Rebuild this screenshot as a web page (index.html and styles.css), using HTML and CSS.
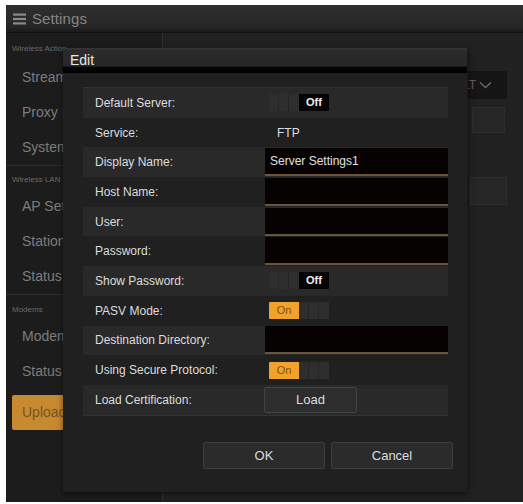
FILE: index.html
```html
<!DOCTYPE html>
<html>
<head>
<meta charset="utf-8">
<link rel="stylesheet" href="styles.css">
</head>
<body>
<div class="app">
  <header class="topbar">
    <svg class="menu-icon" width="13" height="12" viewBox="0 0 13 12"><rect x="0" y="0.5" width="13" height="2.2" fill="#8a8a8a"/><rect x="0" y="4.9" width="13" height="2.2" fill="#8a8a8a"/><rect x="0" y="9.3" width="13" height="2.2" fill="#8a8a8a"/></svg>
    <span class="app-title">Settings</span>
  </header>
  <div class="content">
    <nav class="sidebar">
      <section class="sect sect1">
        <div class="sect-label">Wireless Action</div>
        <div class="nav-item">Streaming</div>
        <div class="nav-item">Proxy Recording</div>
        <div class="nav-item">System</div>
      </section>
      <section class="sect sect2">
        <div class="sect-label">Wireless LAN</div>
        <div class="nav-item">AP Settings</div>
        <div class="nav-item">Station Settings</div>
        <div class="nav-item">Status</div>
      </section>
      <section class="sect sect3">
        <div class="sect-label">Modems</div>
        <div class="nav-item">Modem Settings</div>
        <div class="nav-item">Status</div>
        <div class="upload-btn"><span class="upload-text">Upload Settings</span></div>
      </section>
    </nav>
    <main class="main">
      <div class="bg-select"><span class="bg-select-text">DEFAULT</span><svg width="13" height="8" viewBox="0 0 13 8"><path d="M1 1.5 L6.5 6.5 L12 1.5" fill="none" stroke="#6a6a6a" stroke-width="1.4"/></svg></div>
      <div class="bg-box bg-box1"></div>
      <div class="bg-box bg-box2"></div>
    </main>
  </div>

  <div class="dialog">
    <div class="dialog-title">Edit</div>
    <div class="dialog-body">
      <div class="form">
        <div class="row"><div class="lbl">Default Server:</div><div class="val"><div class="toggle off"><span class="grip"></span><span class="state">Off</span></div></div></div>
        <div class="row"><div class="lbl">Service:</div><div class="val"><span class="plain">FTP</span></div></div>
        <div class="row"><div class="lbl">Display Name:</div><div class="val"><div class="input">Server Settings1</div></div></div>
        <div class="row"><div class="lbl">Host Name:</div><div class="val"><div class="input"></div></div></div>
        <div class="row"><div class="lbl">User:</div><div class="val"><div class="input"></div></div></div>
        <div class="row"><div class="lbl">Password:</div><div class="val"><div class="input"></div></div></div>
        <div class="row"><div class="lbl">Show Password:</div><div class="val"><div class="toggle off"><span class="grip"></span><span class="state">Off</span></div></div></div>
        <div class="row"><div class="lbl">PASV Mode:</div><div class="val"><div class="toggle on"><span class="state">On</span><span class="grip"></span></div></div></div>
        <div class="row"><div class="lbl">Destination Directory:</div><div class="val"><div class="input"></div></div></div>
        <div class="row"><div class="lbl">Using Secure Protocol:</div><div class="val"><div class="toggle on"><span class="state">On</span><span class="grip"></span></div></div></div>
        <div class="row"><div class="lbl">Load Certification:</div><div class="val"><button class="btn load-btn">Load</button></div></div>
      </div>
      <div class="actions">
        <button class="btn act-btn">OK</button>
        <button class="btn act-btn">Cancel</button>
      </div>
    </div>
  </div>
</div>
</body>
</html>
```
FILE: styles.css
```css
* { box-sizing: border-box; }
html, body { margin: 0; padding: 0; background: #ffffff; }
body {
  font-family: "Liberation Sans", Arial, sans-serif;
  width: 523px;
  height: 504px;
  overflow: hidden;
}
.app {
  position: relative;
  margin: 5px 0 0 6px;
  width: 517px;
  height: 497px;
  background: #1d1d1d;
  display: flex;
  flex-direction: column;
  overflow: hidden;
}
.topbar {
  height: 28px;
  flex: none;
  display: flex;
  align-items: center;
  gap: 6px;
  padding-left: 7px;
  background: linear-gradient(#2f2f2f, #262626 80%, #1a1a1a);
  border-bottom: 1px solid #111;
}
.menu-icon { display: block; }
.app-title {
  color: #848484;
  font-size: 15px;
  letter-spacing: 0.1px;
}
.content {
  flex: 1;
  display: flex;
  min-height: 0;
}
.sidebar {
  width: 157px;
  flex: none;
  background: #1c1c1c;
  border-right: 1px solid #303030;
}
.sect { border-bottom: 1px solid #2f2f2f; }
.sect3 { border-bottom: none; }
.sect-label {
  width: 62px;
  overflow: hidden;
  font-size: 8px;
  line-height: 16px;
  height: 16px;
  color: #6a6a6a;
  padding-left: 6px;
  white-space: nowrap;
}
.sect1 .sect-label { margin-top: 8px; margin-bottom: 3px; }
.sect2 .sect-label { margin-top: 6px; margin-bottom: 1px; }
.sect3 .sect-label { margin-top: 7px; margin-bottom: 1px; }
.nav-item {
  width: 57px;
  overflow: hidden;
  height: 35px;
  line-height: 35px;
  padding-left: 16px;
  font-size: 14px;
  color: #7c7c7c;
  white-space: nowrap;
}
.upload-btn {
  margin: 6px 0 0 6px;
  width: 140px;
  height: 35px;
  border-radius: 2px;
  background: #c88a30;
}
.upload-text {
  display: block;
  width: 51px;
  overflow: hidden;
  line-height: 35px;
  padding-left: 10px;
  color: #7a531c;
  font-size: 14px;
  white-space: nowrap;
}
.main {
  flex: 1;
  background: #212121;
  display: flex;
  flex-direction: column;
  align-items: flex-end;
  padding-right: 16px;
}
.bg-select {
  margin-top: 38px;
  width: 140px;
  height: 28px;
  background: #151515;
  display: flex;
  align-items: center;
  justify-content: flex-end;
  gap: 3px;
  padding-right: 15px;
  color: #6a5a5c;
  font-size: 12px;
}
.bg-select svg { display: block; }
.bg-box {
  width: 33px;
  height: 26px;
  background: #262626;
  border: 1px solid #2e2e2e;
  margin-right: 2px;
}
.bg-box1 { margin-top: 8px; }
.bg-box2 { margin-top: 44px; width: 37px; height: 28px; margin-right: 0; }

/* dialog overlay */
.dialog {
  position: absolute;
  left: 57px;
  top: 43px;
  width: 405px;
  height: 444px;
  background: #202020;
  border-right: 1px solid #191919;
  box-shadow: 0 2px 6px rgba(0,0,0,0.5);
  display: flex;
  flex-direction: column;
}
.dialog-title {
  height: 25px;
  flex: none;
  padding: 4px 0 0 7px;
  font-size: 14px;
  color: #e8e8e8;
  background: linear-gradient(#383838 0, #2c2c2c 2px, #262626 72%, #050505 78%, #000 100%);
}
.dialog-body {
  flex: 1;
  padding: 14px 14px 0 20px;
  display: flex;
  flex-direction: column;
}
.form {
  width: 365px;
  border-top: 1px solid #333;
  border-bottom: 1px solid #333;
}
.row {
  height: 29.7px;
  display: flex;
  align-items: center;
  background: #202020;
}
.row:nth-child(odd) { background: #292929; }
.lbl {
  width: 182px;
  flex: none;
  padding-left: 12px;
  font-size: 12px;
  color: #dcdcdc;
  white-space: nowrap;
}
.val {
  flex: 1;
  height: 100%;
  display: flex;
  align-items: center;
}
.plain {
  padding-left: 12px;
  font-size: 12px;
  color: #dcdcdc;
}
.input {
  width: 100%;
  height: 28px;
  background: #060202;
  border-bottom: 2px solid #6a5437;
  padding-left: 5px;
  line-height: 27px;
  font-size: 12px;
  color: #e0e0e0;
  white-space: nowrap;
}
.toggle {
  margin-left: 4px;
  width: 60px;
  height: 17px;
  display: flex;
  border-radius: 1px;
  overflow: hidden;
}
.toggle .grip {
  width: 30px;
  background:
    linear-gradient(90deg, transparent 9px, #242424 9px, #242424 10px, transparent 10px, transparent 19px, #242424 19px, #242424 20px, transparent 20px),
    #2e2e2e;
}
.toggle .state {
  width: 30px;
  text-align: center;
  font-size: 11px;
  line-height: 17px;
}
.toggle.off .state { background: #050505; color: #f0f0f0; font-weight: bold; }
.toggle.on .state { background: #f0a22c; color: #8a4f08; }
.btn {
  font-family: "Liberation Sans", Arial, sans-serif;
  background: #2d2d2d;
  border: 1px solid #444;
  color: #dcdcdc;
  border-radius: 2px;
  padding: 0;
}
.load-btn {
  width: 93px;
  height: 26px;
  font-size: 13px;
  margin-left: -1px;
}
.actions {
  margin-top: 26px;
  display: flex;
  justify-content: flex-end;
  gap: 6px;
}
.act-btn {
  width: 122px;
  height: 27px;
  font-size: 13px;
  background: #2b2b2b;
  border-color: #3e3e3e;
}
```
